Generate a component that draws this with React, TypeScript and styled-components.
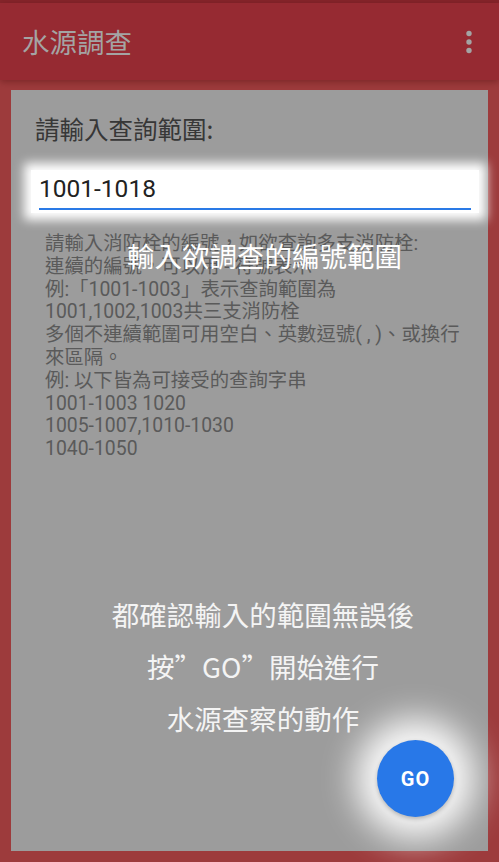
import React from "react";
import styled, { createGlobalStyle } from "styled-components";

const GlobalStyle = createGlobalStyle`
  html, body { margin: 0; padding: 0; background: #9d3b3c; }
  body { font-family: "Roboto", "Noto Sans CJK TC", sans-serif; }
  * { box-sizing: border-box; }
`;

const Screen = styled.div`
  width: 499px;
  height: 862px;
  display: flex;
  flex-direction: column;
  background: #9d3b3c;
  overflow: hidden;
`;

const StatusStrip = styled.div`
  height: 3px;
  background: #86252b;
  flex: none;
`;

const Toolbar = styled.header`
  height: 77px;
  flex: none;
  display: flex;
  align-items: center;
  justify-content: space-between;
  padding: 0 26px 0 22px;
  background: #962a32;
  box-shadow: 0 2px 7px rgba(60, 0, 0, 0.35);
  position: relative;
  z-index: 1;
`;

const Title = styled.h1`
  margin: 0;
  font-family: "Noto Sans CJK TC", sans-serif;
  font-weight: 400;
  font-size: 27.5px;
  line-height: 1;
  color: #a4a4a4;
`;

const Body = styled.main`
  flex: 1;
  padding: 10px 11px 11px 11px;
  display: flex;
`;

const Panel = styled.section`
  flex: 1;
  position: relative;
  background: #9c9c9c;
  padding: 24px 17px 0 24px;
  display: flex;
  flex-direction: column;
`;

const Label = styled.div`
  font-family: "Noto Sans CJK TC", sans-serif;
  font-size: 24.5px;
  line-height: 30px;
  color: #373737;
`;

const InputSpot = styled.div`
  margin: 26px -8px 0 -4px;
  padding: 0 8px 3px 8px;
  background: #fff;
  box-shadow: 0 0 10px 7px #fff;
`;

const Field = styled.div`
  padding-top: 5px;
  padding-bottom: 5px;
  border-bottom: 2.5px solid #2a7ae6;
  font-family: "Roboto", sans-serif;
  font-size: 24.5px;
  line-height: 28px;
  color: #222;
`;

const Help = styled.div`
  margin-top: 20px;
  padding-left: 10px;
  font-family: "Roboto", "Noto Sans CJK TC", sans-serif;
  font-size: 19.4px;
  line-height: 22.8px;
  color: #5a5a5a;
`;

const HelpLine = styled.div`
  white-space: nowrap;
`;

const HintTop = styled.div`
  position: absolute;
  top: 152px;
  left: 116px;
  font-family: "Noto Sans CJK TC", sans-serif;
  font-size: 27.5px;
  line-height: 27px;
  color: #fff;
  white-space: nowrap;
`;

const HintBottom = styled.div`
  position: absolute;
  top: 498px;
  left: 0;
  right: 0;
  padding-left: 27px;
  text-align: center;
  font-family: "Noto Sans CJK TC", sans-serif;
  font-size: 27.5px;
  line-height: 52px;
  color: #f4f4f4;
`;

const Fab = styled.button`
  position: absolute;
  right: 34px;
  bottom: 34px;
  width: 77px;
  height: 77px;
  border-radius: 50%;
  border: none;
  background: #2878e8;
  color: #fff;
  font-family: "Roboto", sans-serif;
  font-weight: 700;
  font-size: 20px;
  letter-spacing: 1px;
  display: flex;
  align-items: center;
  justify-content: center;
  padding: 0;
  box-shadow: 0 2px 4px rgba(0, 0, 0, 0.25), 0 0 34px 22px rgba(255, 255, 255, 0.95);
`;

const Kebab = () => (
  <svg width="8" height="24" viewBox="0 0 8 24" aria-label="more">
    <circle cx="4" cy="3.5" r="2.7" fill="#a4a4a4" />
    <circle cx="4" cy="12" r="2.7" fill="#a4a4a4" />
    <circle cx="4" cy="20.5" r="2.7" fill="#a4a4a4" />
  </svg>
);

const helpLines = [
  "請輸入消防栓的編號，如欲查詢多支消防栓:",
  "連續的編號，可以用 - 符號表示",
  "例:「1001-1003」表示查詢範圍為",
  "1001,1002,1003共三支消防栓",
  "多個不連續範圍可用空白、英數逗號( , )、或換行",
  "來區隔。",
  "例:  以下皆為可接受的查詢字串",
  "1001-1003 1020",
  "1005-1007,1010-1030",
  "1040-1050",
];

export default function App() {
  return (
    <>
      <GlobalStyle />
      <Screen>
        <StatusStrip />
        <Toolbar>
          <Title>水源調查</Title>
          <Kebab />
        </Toolbar>
        <Body>
          <Panel>
            <Label>請輸入查詢範圍:</Label>
            <InputSpot>
              <Field>1001-1018</Field>
            </InputSpot>
            <Help>
              {helpLines.map((l, i) => (
                <HelpLine key={i}>{l}</HelpLine>
              ))}
            </Help>
            <HintTop>輸入欲調查的編號範圍</HintTop>
            <HintBottom>
              <div>都確認輸入的範圍無誤後</div>
              <div>按”GO”開始進行</div>
              <div>水源查察的動作</div>
            </HintBottom>
            <Fab>GO</Fab>
          </Panel>
        </Body>
      </Screen>
    </>
  );
}
